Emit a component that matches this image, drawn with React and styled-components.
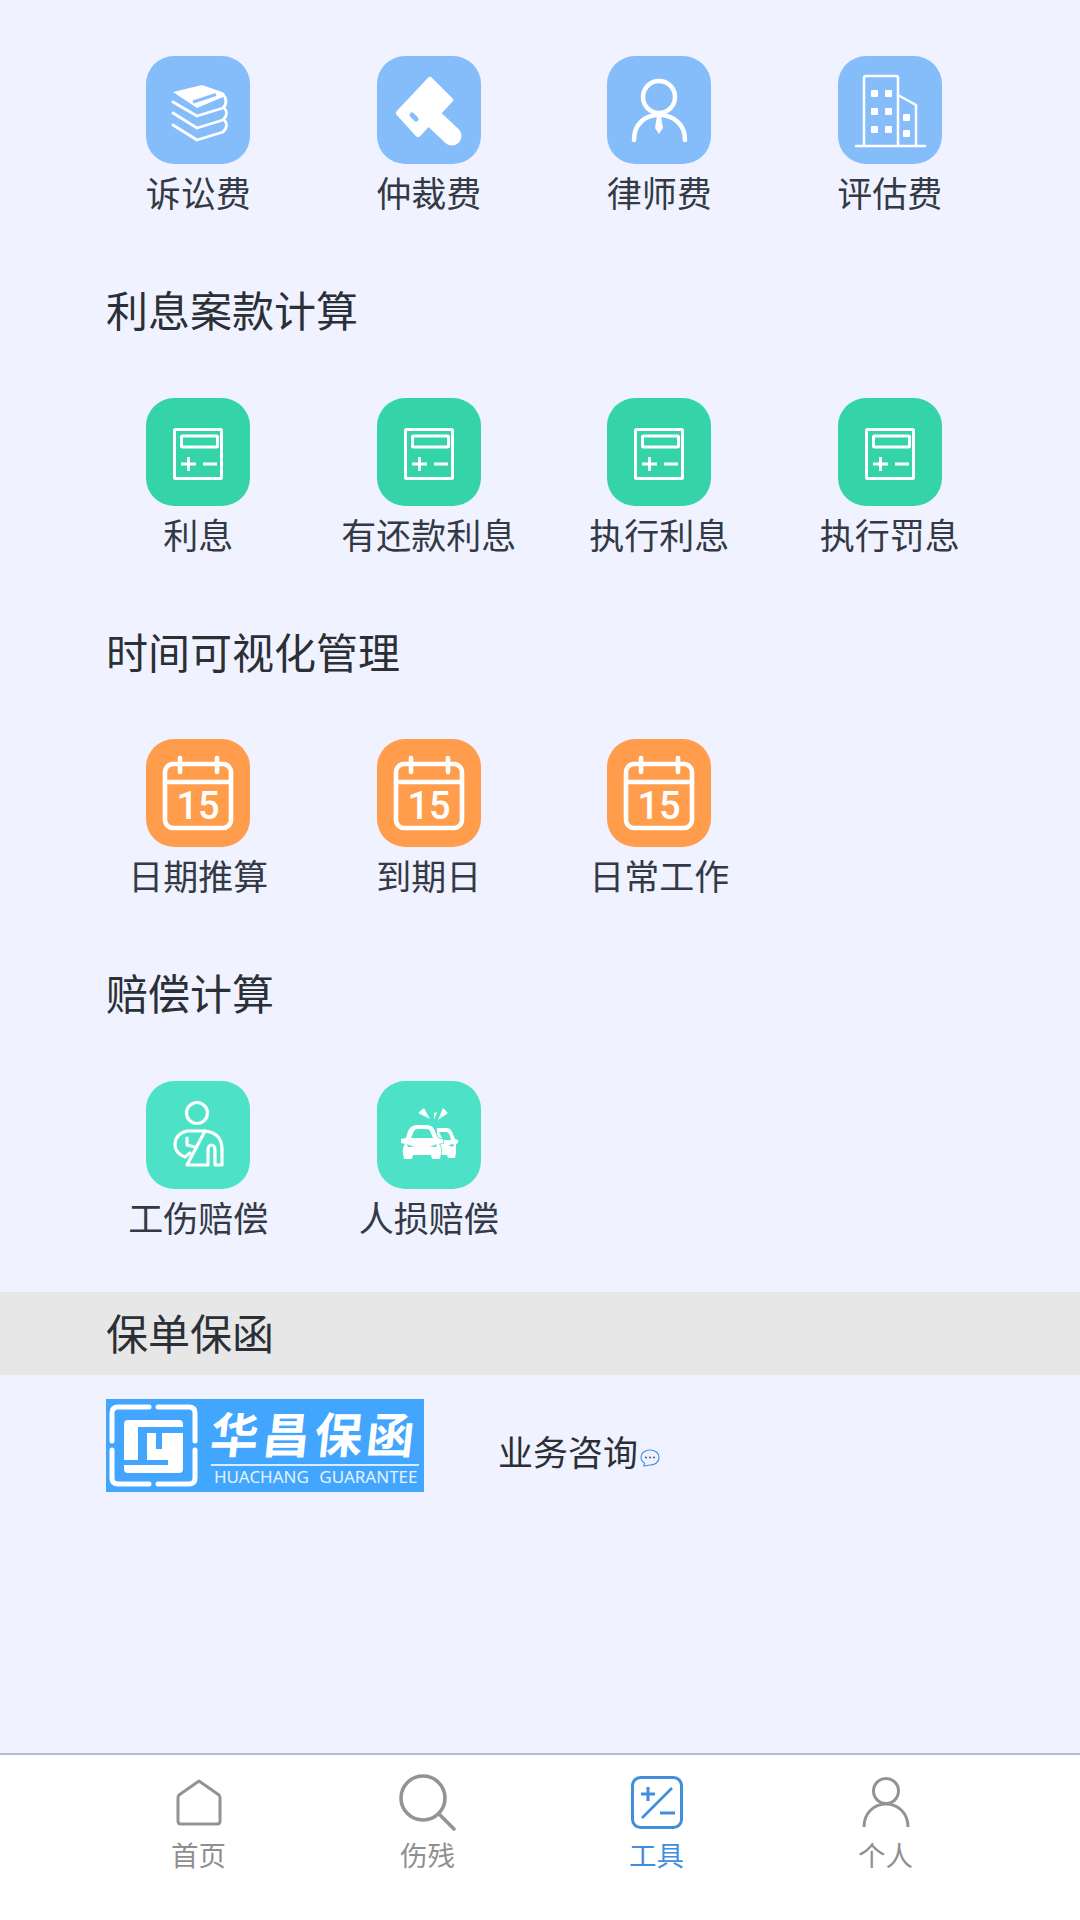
import React from "react";
import styled, { createGlobalStyle } from "styled-components";

const GlobalStyle = createGlobalStyle`
  html, body {
    margin: 0;
    padding: 0;
    background: #f0f3ff;
    font-family: "Noto Sans CJK SC", "Noto Sans", sans-serif;
  }
`;

function BooksIcon() {
  return (
    <TileSvg viewBox="0 0 104 108">
      <path d="M27 36 L56 29 L76 36 Q79 38 77 41 L51 52 Z" fill="#fff" />
      <path d="M47 46 L70 38.5" stroke="#85bdfb" strokeWidth="3" fill="none" />
      <g stroke="#fff" strokeWidth="2.8" fill="none" strokeLinecap="round" strokeLinejoin="round">
        <path d="M27 46 L51 60 L77 52 Q83 46 77 38" />
        <path d="M27 57 L51 72 L77 64 Q83 58 79 53" />
        <path d="M27 69 L51 84 L77 76 Q83 70 79 65" />
      </g>
    </TileSvg>
  );
}

function HammerIcon() {
  return (
    <TileSvg viewBox="0 0 104 108">
      <path d="M53 24 L73 44 L41 78 L22 57 Z" fill="#fff" stroke="#fff" strokeWidth="6" strokeLinejoin="round" />
      <path d="M58 64 L75 80" stroke="#fff" strokeWidth="19" strokeLinecap="round" />
      <path d="M35 59 L39 63" stroke="#85bdfb" strokeWidth="5" strokeLinecap="round" />
    </TileSvg>
  );
}

function LawyerIcon() {
  return (
    <TileSvg viewBox="0 0 104 108">
      <g stroke="#fff" strokeWidth="4.5" fill="none" strokeLinecap="round">
        <circle cx="52" cy="41" r="16" />
        <path d="M27 84 C27 68 38 59 52 59 C66 59 78 68 78 84" />
      </g>
      <path d="M50 60 L54 60 L56 72 L52 78 L48 72 Z" fill="#fff" />
    </TileSvg>
  );
}

function BuildingIcon() {
  const windows = [
    [33, 34], [47, 34], [33, 52], [47, 52], [33, 70], [47, 70], [65, 58], [65, 74],
  ];
  return (
    <TileSvg viewBox="0 0 104 108">
      <g stroke="#fff" strokeWidth="2.5" fill="none" strokeLinecap="round" strokeLinejoin="round">
        <path d="M26 89 L26 22 Q26 20 28 20 L58 20 Q60 20 60 22 L60 89" />
        <path d="M60 39 L78 49 L78 89" />
        <path d="M18 90 L87 90" />
      </g>
      {windows.map(([x, y]) => (
        <rect key={`${x}-${y}`} x={x} y={y} width="7" height="7" rx="1" fill="#fff" />
      ))}
    </TileSvg>
  );
}

function CalcIcon() {
  return (
    <TileSvg viewBox="0 0 104 108">
      <g stroke="#fff" strokeWidth="3" fill="none">
        <rect x="28.5" y="31.5" width="47" height="49" rx="1" />
        <rect x="35.5" y="38" width="36" height="11" rx="1" />
        <path d="M35 66 L50 66 M42.5 59 L42.5 73 M57 66 L71 66" />
      </g>
    </TileSvg>
  );
}

function CalendarIcon() {
  return (
    <TileSvg viewBox="0 0 104 108">
      <g stroke="#fff" strokeWidth="4.6" fill="none" strokeLinecap="round">
        <rect x="19" y="25" width="66" height="64" rx="8" />
        <path d="M19 43 L85 43" />
        <path d="M34 19 L34 33 M71 19 L71 33" />
      </g>
      <CalendarDay x="52" y="80" textAnchor="middle">15</CalendarDay>
    </TileSvg>
  );
}

function InjuryIcon() {
  return (
    <TileSvg viewBox="0 0 104 108">
      <g stroke="#fff" strokeWidth="3.2" fill="none" strokeLinecap="round" strokeLinejoin="round">
        <circle cx="51" cy="32" r="10.5" />
        <path d="M59 50 L41 50 Q29 53 29 64 Q29 72 39 76 L44 72" />
        <path d="M59 50 Q76 52 76 68 L76 84 L69 84 L69 70 Q69 64 65.500 64 Q62 64 62 70 L62 84 L41 84 L59 50" />
        <path d="M41 57 L41 64 L49 66" />
      </g>
    </TileSvg>
  );
}

function CarsIcon() {
  return (
    <TileSvg viewBox="0 0 104 108">
      <path d="M41 32 L47 27 L53 38 Z M57 32 L60 31 L57 39 Z M66 27 L71 32 L61 39 Z" fill="#fff" />
      <path d="M60 47 L70 47 Q74 47 76 53 L78 58 L81 59 L81 62 L79 63 L79 72 L78 77 L71 77 L70 74 L60 74 Z" fill="#fff" />
      <path d="M62 51 L69 51 Q72 51 73 55 L74 59 L66 59 Z" fill="#4de2c8" />
      <path d="M71 64 L77 63 L76 66 Z" fill="#4de2c8" />
      <path
        d="M31 50 Q34 44 40 44 L50 44 Q56 44 58 50 L61 57 L66 58 L66 62 L62 63 Q65 67 64 72 L63 78 L55 78 L54 74 L36 74 L35 78 L27 78 L26 72 Q25 67 28 63 L24 62 L24 58 L29 57 Z"
        fill="#fff"
        stroke="#4de2c8"
        strokeWidth="1.5"
        paintOrder="stroke"
      />
      <path d="M34 57 L37 50 Q38 48 41 48 L50 48 Q52 48 53 50 L56 57 Z" fill="#4de2c8" />
      <path d="M30 63 L37 66 L31 66 Z M60 63 L53 66 L59 66 Z" fill="#4de2c8" />
    </TileSvg>
  );
}

function HomeTabIcon() {
  return (
    <TabSvg viewBox="0 0 60 56">
      <path
        d="M30 5 L50 19 Q51 20 51 22 L51 45 Q51 48 48 48 L12 48 Q9 48 9 45 L9 22 Q9 20 10 19 Z"
        stroke="#939393"
        strokeWidth="3"
        fill="none"
        strokeLinejoin="round"
      />
    </TabSvg>
  );
}

function SearchTabIcon() {
  return (
    <TabSvg viewBox="0 0 60 56">
      <circle cx="25" cy="22" r="22" stroke="#939393" strokeWidth="3.6" fill="none" />
      <path d="M41 38 L56 53" stroke="#939393" strokeWidth="3.6" strokeLinecap="round" />
    </TabSvg>
  );
}

function ToolTabIcon() {
  return (
    <TabSvg viewBox="0 0 60 56">
      <rect x="5.5" y="1.5" width="49" height="50" rx="8" stroke="#418fdc" strokeWidth="3" fill="none" />
      <g stroke="#418fdc" fill="none">
        <path d="M14 18 L28 18 M21 11 L21 25" strokeWidth="3" />
        <path d="M15 42 L45 12" strokeWidth="2.6" />
        <path d="M33 37 L48 37" strokeWidth="3" />
      </g>
    </TabSvg>
  );
}

function PersonTabIcon() {
  return (
    <TabSvg viewBox="0 0 60 56">
      <g stroke="#939393" strokeWidth="3" fill="none">
        <circle cx="30" cy="15" r="12.5" />
        <path d="M8 51 C8 37 18 28 30 28 C42 28 52 37 52 51" />
      </g>
    </TabSvg>
  );
}

function BubbleIcon() {
  return (
    <svg width="20" height="18" viewBox="0 0 20 18">
      <path
        d="M10 1 C15 1 19 4 19 8.5 C19 13 15 16 10 16 L4 17 L4.5 14 C2 12.5 1 10.500 1 8.5 C1 4 5 1 10 1 Z"
        stroke="#4a90d9"
        strokeWidth="1.2"
        fill="none"
      />
      <circle cx="6" cy="8.5" r="1.1" fill="#4a6a8c" />
      <circle cx="10" cy="8.5" r="1.1" fill="#4a6a8c" />
      <circle cx="14" cy="8.5" r="1.1" fill="#4a6a8c" />
    </svg>
  );
}

function LogoMark() {
  return (
    <svg width="96" height="93" viewBox="0 0 96 93" style={{ flexShrink: 0 }}>
      <g stroke="#fff" strokeWidth="5" fill="none" strokeLinecap="round" strokeLinejoin="round">
        <path d="M6 42 L6 14 Q6 8 12 8 L43 8" />
        <path d="M52 8 L83 8 Q89 8 89 14 L89 42" />
        <path d="M89 51 L89 79 Q89 85 83 85 L52 85" />
        <path d="M43 85 L12 85 Q6 85 6 79 L6 51" />
      </g>
      <rect x="18" y="21" width="59" height="53" rx="4" fill="#fff" />
      <g fill="#42a6ff">
        <rect x="32" y="28" width="45" height="6" />
        <rect x="32" y="34" width="9" height="27" />
        <rect x="50" y="34" width="6" height="16" />
        <rect x="17" y="61" width="45" height="5" />
      </g>
    </svg>
  );
}

const sections = [
  {
    items: [
      { label: "诉讼费", color: "#85bdfb", Icon: BooksIcon },
      { label: "仲裁费", color: "#85bdfb", Icon: HammerIcon },
      { label: "律师费", color: "#85bdfb", Icon: LawyerIcon },
      { label: "评估费", color: "#85bdfb", Icon: BuildingIcon },
    ],
  },
  {
    title: "利息案款计算",
    items: [
      { label: "利息", color: "#34d3a8", Icon: CalcIcon },
      { label: "有还款利息", color: "#34d3a8", Icon: CalcIcon },
      { label: "执行利息", color: "#34d3a8", Icon: CalcIcon },
      { label: "执行罚息", color: "#34d3a8", Icon: CalcIcon },
    ],
  },
  {
    title: "时间可视化管理",
    items: [
      { label: "日期推算", color: "#ff9d4d", Icon: CalendarIcon },
      { label: "到期日", color: "#ff9d4d", Icon: CalendarIcon },
      { label: "日常工作", color: "#ff9d4d", Icon: CalendarIcon },
    ],
  },
  {
    title: "赔偿计算",
    items: [
      { label: "工伤赔偿", color: "#4de2c8", Icon: InjuryIcon },
      { label: "人损赔偿", color: "#4de2c8", Icon: CarsIcon },
    ],
  },
];

const tabs = [
  { label: "首页", Icon: HomeTabIcon },
  { label: "伤残", Icon: SearchTabIcon },
  { label: "工具", Icon: ToolTabIcon, active: true },
  { label: "个人", Icon: PersonTabIcon },
];

export default function App() {
  return (
    <Page>
      <GlobalStyle />
      <Main>
        {sections.map((section, index) => (
          <section key={index}>
            {section.title && <SectionTitle>{section.title}</SectionTitle>}
            <ToolGrid>
              {section.items.map(({ label, color, Icon }) => (
                <Tool key={label}>
                  <Tile $color={color}>
                    <Icon />
                  </Tile>
                  <ToolLabel>{label}</ToolLabel>
                </Tool>
              ))}
            </ToolGrid>
          </section>
        ))}

        <Band>保单保函</Band>
        <GuaranteeRow>
          <Logo>
            <LogoMark />
            <LogoText>
              <LogoName>华昌保函</LogoName>
              <LogoEnglish>HUACHANG GUARANTEE</LogoEnglish>
            </LogoText>
          </Logo>
          <Consult>
            业务咨询
            <BubbleIcon />
          </Consult>
        </GuaranteeRow>
      </Main>

      <TabBar>
        {tabs.map(({ label, Icon, active }) => (
          <Tab key={label} $active={active}>
            <Icon />
            <span>{label}</span>
          </Tab>
        ))}
      </TabBar>
    </Page>
  );
}

const Page = styled.div`
  width: 1080px;
  height: 1920px;
  display: flex;
  flex-direction: column;
  background: #f0f3ff;
  overflow: hidden;
`;

const Main = styled.div`
  flex: 1;
  padding-top: 56px;
`;

const SectionTitle = styled.h2`
  margin: 70px 0 63.67px 106px;
  font-size: 42px;
  font-weight: 400;
  line-height: 50px;
  color: #2b2f36;
`;

const ToolGrid = styled.div`
  display: grid;
  grid-template-columns: repeat(4, 230.5px);
  padding-left: 83px;
`;

const Tool = styled.div`
  display: flex;
  flex-direction: column;
  align-items: center;
`;

const Tile = styled.div`
  width: 104px;
  height: 108px;
  border-radius: 28px;
  background: ${(props) => props.$color};
`;

const TileSvg = styled.svg`
  display: block;
  width: 104px;
  height: 108px;
`;

const CalendarDay = styled.text`
  font-family: "Roboto", "Liberation Sans", sans-serif;
  font-size: 38px;
  font-weight: 500;
  fill: #fff;
`;

const ToolLabel = styled.div`
  margin: 8px 0 2px;
  font-size: 35px;
  line-height: 40px;
  color: #333a45;
  white-space: nowrap;
`;

const Band = styled.div`
  margin-top: 53px;
  height: 83px;
  padding-left: 106px;
  background: #e7e7e7;
  font-size: 42px;
  line-height: 80px;
  color: #2b2f36;
`;

const GuaranteeRow = styled.div`
  display: flex;
  align-items: center;
  padding: 24px 0 0 106px;
`;

const Logo = styled.div`
  width: 318px;
  height: 93px;
  display: flex;
  align-items: center;
  flex-shrink: 0;
  background: #42a6ff;
  color: #fff;
`;

const LogoText = styled.div`
  margin-left: 9px;
  display: flex;
  flex-direction: column;
`;

const LogoName = styled.div`
  font-size: 48px;
  line-height: 60px;
  font-weight: 700;
  letter-spacing: 4px;
  white-space: nowrap;
  transform: skewX(-6deg);
`;

const LogoEnglish = styled.div`
  margin-top: 2px;
  padding-left: 3px;
  border-top: 2px solid #d5ebff;
  font-family: "Noto Sans", sans-serif;
  font-size: 17px;
  line-height: 22px;
  word-spacing: 6px;
  white-space: nowrap;
  color: #e4f2ff;
`;

const Consult = styled.div`
  display: flex;
  align-items: flex-end;
  margin: 12px 0 0 74px;
  font-size: 35px;
  line-height: 44px;
  color: #2b2f36;

  svg {
    margin: 0 0 6px 2px;
  }
`;

const TabBar = styled.nav`
  height: 167px;
  box-sizing: border-box;
  display: grid;
  grid-template-columns: repeat(4, 229px);
  padding: 21px 0 0 84px;
  border-top: 2px solid #b6bcc8;
  background: #fff;
`;

const Tab = styled.div`
  display: flex;
  flex-direction: column;
  align-items: center;
  gap: 6px;
  font-size: 27.5px;
  line-height: 32px;
  color: ${(props) => (props.$active ? "#418fdc" : "#8f8f8f")};
`;

const TabSvg = styled.svg`
  display: block;
  width: 60px;
  height: 56px;
  overflow: visible;
`;
